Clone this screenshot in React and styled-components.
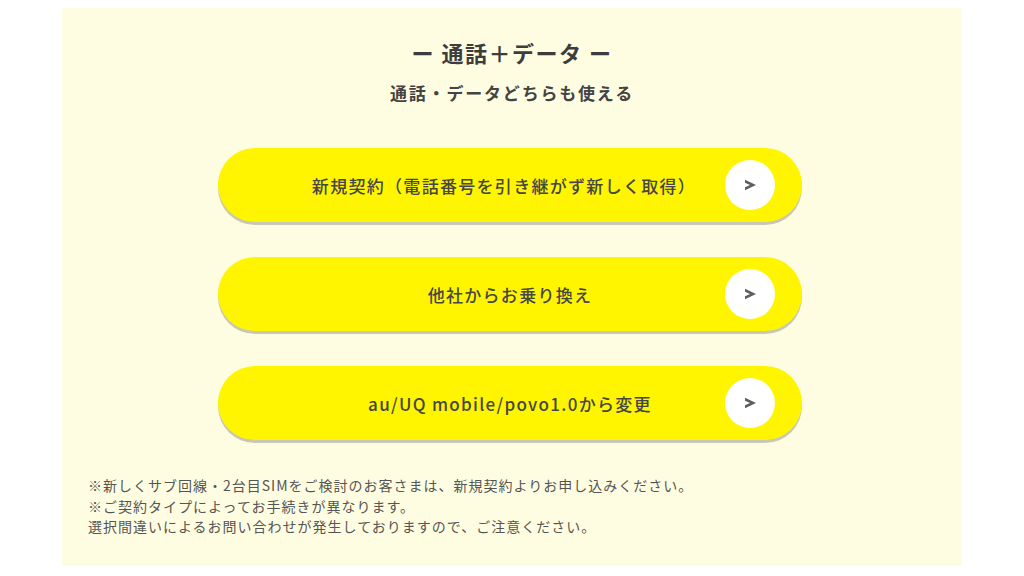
import styled, { createGlobalStyle } from "styled-components";

const GlobalStyle = createGlobalStyle`
  html, body {
    margin: 0;
    padding: 0;
    background: #ffffff;
  }
  body {
    font-family: "Noto Sans CJK JP", "Noto Sans", sans-serif;
  }
`;

const Page = styled.div`
  width: 1024px;
  height: 576px;
  padding: 8px 62px 10px;
  box-sizing: border-box;
`;

const Panel = styled.section`
  height: 100%;
  background: #fffde1;
  display: flex;
  flex-direction: column;
  align-items: center;
  padding-top: 29px;
  box-sizing: border-box;
`;

const Title = styled.h2`
  margin: 0;
  font-size: 22px;
  font-weight: 700;
  line-height: 30px;
  color: #3d3d3d;
  letter-spacing: 1.5px;
`;

const Subtitle = styled.p`
  margin: 14px 0 0;
  font-size: 17px;
  font-weight: 700;
  line-height: 24px;
  color: #444;
  letter-spacing: 1.8px;
`;

const ButtonList = styled.div`
  margin-top: 43px;
  margin-right: 4px;
  display: flex;
  flex-direction: column;
  gap: 35px;
`;

const ChoiceButton = styled.a`
  position: relative;
  width: 584px;
  height: 74px;
  border-radius: 37px;
  background: #fff500;
  box-shadow: 0 3px 0 #c9c8b4;
  display: flex;
  align-items: center;
  justify-content: center;
  font-size: 17px;
  font-weight: 500;
  color: #464646;
  letter-spacing: 1.3px;
  text-decoration: none;
  cursor: pointer;
  padding-right: ${(p) => p.$shift || 0}px;
  box-sizing: border-box;
`;

const Arrow = styled.span`
  position: absolute;
  right: 27px;
  top: 50%;
  transform: translateY(-50%);
  width: 50px;
  height: 50px;
  border-radius: 50%;
  background: #ffffff;
  display: flex;
  align-items: center;
  justify-content: center;
`;

const Notes = styled.div`
  align-self: stretch;
  margin-top: 35px;
  padding-left: 26px;
  font-size: 14px;
  line-height: 20.5px;
  letter-spacing: 1px;
  color: #555;
`;

const NoteLine = styled.p`
  margin: 0;
`;

const choices = [
  { label: "新規契約（電話番号を引き継がず新しく取得）", shift: 12 },
  { label: "他社からお乗り換え", shift: 0 },
  { label: "au/UQ mobile/povo1.0から変更", shift: 0 },
];

function ArrowIcon() {
  return (
    <svg width="13" height="12" viewBox="0 0 13 12">
      <path d="M1 0.8 L12 6 L1 11.2 L1 8.2 L6 6 L1 3.8 Z" fill="#5e5e5e" />
    </svg>
  );
}

export default function App() {
  return (
    <>
      <GlobalStyle />
      <Page>
        <Panel>
          <Title>ー 通話＋データ ー</Title>
          <Subtitle>通話・データどちらも使える</Subtitle>
          <ButtonList>
            {choices.map((c) => (
              <ChoiceButton key={c.label} $shift={c.shift}>
                {c.label}
                <Arrow>
                  <ArrowIcon />
                </Arrow>
              </ChoiceButton>
            ))}
          </ButtonList>
          <Notes>
            <NoteLine>※新しくサブ回線・2台目SIMをご検討のお客さまは、新規契約よりお申し込みください。</NoteLine>
            <NoteLine>※ご契約タイプによってお手続きが異なります。</NoteLine>
            <NoteLine>選択間違いによるお問い合わせが発生しておりますので、ご注意ください。</NoteLine>
          </Notes>
        </Panel>
      </Page>
    </>
  );
}
